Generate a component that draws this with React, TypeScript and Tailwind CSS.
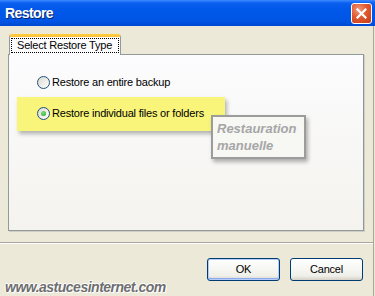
export default function App() {
  const ui = "font-['Liberation_Sans',Arial,sans-serif] text-[11px] tracking-[-0.2px]";

  return (
    <div className={`relative w-[375px] h-[296px] overflow-hidden bg-[#ECE9D8] ${ui} text-black`}>
      {/* title bar */}
      <div className="h-[26px] flex items-center justify-between pl-[5px] pr-[3px] bg-[linear-gradient(to_bottom,#3D8BFF_0%,#0A5EEE_12%,#0058E8_40%,#0055E5_80%,#0049D2_100%)]">
        <span className="font-['Liberation_Sans',Arial,sans-serif] font-bold text-[14px] tracking-[-0.6px] text-white [text-shadow:1px_1px_0_#0A246A]">
          Restore
        </span>
        <button className="w-[21px] h-[21px] rounded-[3px] border border-white flex items-center justify-center bg-[radial-gradient(circle_at_35%_30%,#F39A7E_0%,#E0582F_45%,#C43C17_100%)]">
          <svg width="11" height="11" viewBox="0 0 11 11">
            <path d="M1.5 1.5 L9.5 9.5 M9.5 1.5 L1.5 9.5" stroke="#fff" strokeWidth="2.2" strokeLinecap="square" />
          </svg>
        </button>
      </div>

      {/* window body */}
      <div className="w-[374px] h-[270px] border-r border-[#ACA899] flex flex-col">
        <div className="pt-[8px] pl-[8px]">
          {/* tab strip */}
          <div className="flex">
            <div className="ml-[1px] w-[112px] h-[21px] rounded-t-[3px] border-t-[3px] border-[#FFC83C] border-x border-x-[#919B9C] bg-[#FCFCFE] flex items-start pt-[1px] px-[1px] relative z-10 -mb-[1px]">
              <div className="w-full h-[15px] border border-dotted border-black flex items-center pl-[5px]">
                Select Restore Type
              </div>
            </div>
          </div>

          {/* tab panel */}
          <div className="w-[356px] h-[177px] border border-[#919B9C] border-r-[#8C969B] bg-[linear-gradient(to_bottom,#FCFCFE,#F4F3EE)] shadow-[1px_1px_0_#D0CEC3] flex flex-col items-start">
            <label className="mt-[21px] ml-[28px] flex items-center gap-[2px] h-[13px]">
              <Radio checked={false} />
              <span>Restore an entire backup</span>
            </label>

            <div className="mt-[8px] ml-[8px] w-[208px] h-[34px] bg-[#F8F57A] shadow-[2px_3px_4px_rgba(0,0,0,0.28)] flex items-center pl-[20px] pb-[2px]">
              <label className="flex items-center gap-[2px] h-[13px]">
                <Radio checked />
                <span>Restore individual files or folders</span>
              </label>
            </div>
          </div>
        </div>

        {/* separator */}
        <div className="mt-[11px] h-[2px] border-t border-[#ACA899] border-b border-b-white" />

        {/* buttons */}
        <div className="mt-[14px] flex justify-end gap-[10px] pr-[10px]">
          <button className="w-[73px] h-[23px] rounded-[3px] border border-[#003C74] bg-[linear-gradient(to_bottom,#FFFFFF,#F0F0EA_80%,#D6D0C5)] shadow-[inset_0_0_0_1px_#B4CCF6,inset_0_-1px_0_1px_#8DAAF0] flex items-center justify-center">
            OK
          </button>
          <button className="w-[73px] h-[23px] rounded-[3px] border border-[#003C74] bg-[linear-gradient(to_bottom,#FFFFFF,#F0F0EA_80%,#D6D0C5)] flex items-center justify-center">
            Cancel
          </button>
        </div>
      </div>

      {/* annotation callout */}
      <div className="absolute left-[211px] top-[115px] w-[95px] h-[44px] border-2 border-[#9C9C9C] bg-[#F7F7F4] shadow-[2px_3px_4px_rgba(0,0,0,0.3)] pl-[4px] pt-[3px] font-['Liberation_Sans',Arial,sans-serif] font-bold italic text-[13px] leading-[17px] tracking-[0px] text-[#A6A6A6]">
        Restauration
        <br />
        manuelle
      </div>

      {/* watermark */}
      <div className="absolute left-[5px] bottom-[1px] font-['Liberation_Sans',Arial,sans-serif] font-bold italic text-[14px] leading-[16px] tracking-[-0.5px] text-[#6E6E6E] [text-shadow:1px_1px_0_#fff,-1px_0_0_#fff,0_-1px_0_#fff,1px_0_0_#fff]">
        www.astucesinternet.com
      </div>
    </div>
  );
}

function Radio({ checked }: { checked: boolean }) {
  return (
    <span className="w-[13px] h-[13px] rounded-full border border-[#1C5180] bg-[linear-gradient(135deg,#DCD9D0,#FFFFFF)] flex items-center justify-center shrink-0">
      {checked && (
        <span className="w-[5px] h-[5px] rounded-full bg-[radial-gradient(circle_at_40%_35%,#7CE37C,#21A121)]" />
      )}
    </span>
  );
}
